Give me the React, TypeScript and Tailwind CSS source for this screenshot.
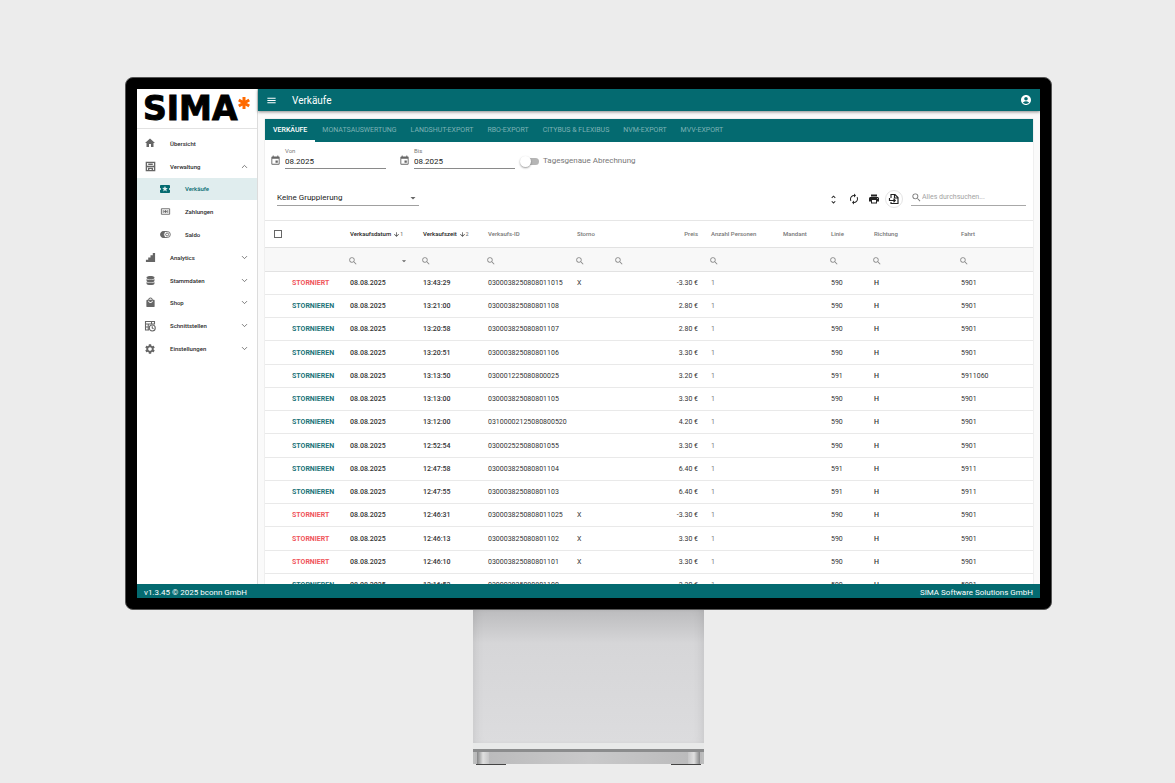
import type { ReactNode } from "react";
import {
  MdAccountCircle,
  MdArrowDownward,
  MdArrowDropDown,
  MdAutorenew,
  MdEvent,
  MdHome,
  MdLocalActivity,
  MdLocalMall,
  MdMenu,
  MdPrint,
  MdSearch,
  MdSettings,
  MdUnfoldMore,
} from "react-icons/md";
import { ChevronDown, ChevronUp } from "lucide-react";
import { FaDatabase } from "react-icons/fa";

function AsteriskMark() {
  return (
    <svg viewBox="0 0 24 24" className="ml-px size-3 shrink-0" stroke="#ff6a00" strokeWidth="6" aria-hidden="true">
      <path d="M12 0v24M1.6 6l20.8 12M22.4 6 1.6 18" />
    </svg>
  );
}

function StoreIcon() {
  return (
    <svg viewBox="0 0 24 24" className="size-[11px]" fill="none" stroke="currentColor" strokeWidth="3" aria-hidden="true">
      <path d="M3 3h18v18H3zM3 12h18" />
      <path d="M7 7h10M8 21v-5h8v5" strokeWidth="3" />
    </svg>
  );
}

function BanknoteIcon() {
  return (
    <svg viewBox="0 0 24 24" className="size-[11px]" fill="none" stroke="currentColor" strokeWidth="2" aria-hidden="true">
      <path d="M3 6h18v12H3z" />
      <path d="M7 9v6M17 9v6" />
      <circle cx="12" cy="12" r="2" fill="currentColor" />
    </svg>
  );
}

function BalanceIcon() {
  return (
    <svg viewBox="0 0 24 24" className="size-[11px]" fill="none" stroke="currentColor" strokeWidth="2" aria-hidden="true">
      <path d="M8 5.5h8a6.5 6.5 0 0 1 0 13H8a6.5 6.5 0 0 1 0-13z" />
      <path d="M8 5.5a6.5 6.5 0 0 0 0 13h3a9 9 0 0 1 0-13z" fill="currentColor" />
      <circle cx="15.5" cy="12" r="3.2" />
    </svg>
  );
}

function StairsIcon() {
  return (
    <svg viewBox="0 0 24 24" className="size-[11px]" fill="currentColor" aria-hidden="true">
      <path d="M2 22v-5h5v-5h5V7h5V2h5v20z" />
    </svg>
  );
}

function TableClockIcon() {
  return (
    <svg viewBox="0 0 24 24" className="size-3" fill="none" stroke="currentColor" strokeWidth="2.2" aria-hidden="true">
      <path d="M10 20H3V3h18v6M3 8h18M8.500 8v12M3 14h6M15 3v5" />
      <circle cx="16.500" cy="16" r="6" />
      <path d="M16.500 12.500V16l2.500 1.500" />
    </svg>
  );
}

function ExportIcon() {
  return (
    <svg viewBox="0 0 24 24" className="size-3" fill="none" stroke="currentColor" strokeWidth="2.300" aria-hidden="true">
      <path d="M6 10V3h8l6 6v12H6v-3M13 3v7h7" />
      <path d="M3 10v5h11M11 11.500l3.500 3.500-3.500 3.500" />
    </svg>
  );
}

type NavItem = {
  label: string;
  icon: ReactNode;
  child?: boolean;
  active?: boolean;
  toggle?: "open" | "closed";
};

const navItems: NavItem[] = [
  { label: "Übersicht", icon: <MdHome className="size-3" /> },
  { label: "Verwaltung", icon: <StoreIcon />, toggle: "open" },
  { label: "Verkäufe", icon: <MdLocalActivity className="size-3" />, child: true, active: true },
  { label: "Zahlungen", icon: <BanknoteIcon />, child: true },
  { label: "Saldo", icon: <BalanceIcon />, child: true },
  { label: "Analytics", icon: <StairsIcon />, toggle: "closed" },
  { label: "Stammdaten", icon: <FaDatabase className="size-[9px]" />, toggle: "closed" },
  { label: "Shop", icon: <MdLocalMall className="size-[11px]" />, toggle: "closed" },
  { label: "Schnittstellen", icon: <TableClockIcon />, toggle: "closed" },
  { label: "Einstellungen", icon: <MdSettings className="size-3" />, toggle: "closed" },
];

const tabs = [
  "VERKÄUFE",
  "MONATSAUSWERTUNG",
  "LANDSHUT-EXPORT",
  "RBO-EXPORT",
  "CITYBUS & FLEXIBUS",
  "NVM-EXPORT",
  "MVV-EXPORT",
];

type Sale = {
  time: string;
  id: string;
  price: string;
  line: string;
  trip: string;
  cancelled?: boolean;
};

const sales: Sale[] = [
  { time: "13:43:29", id: "0300038250808011015", price: "-3.30 €", line: "590", trip: "5901", cancelled: true },
  { time: "13:21:00", id: "030003825080801108", price: "2.80 €", line: "590", trip: "5901" },
  { time: "13:20:58", id: "030003825080801107", price: "2.80 €", line: "590", trip: "5901" },
  { time: "13:20:51", id: "030003825080801106", price: "3.30 €", line: "590", trip: "5901" },
  { time: "13:13:50", id: "030001225080800025", price: "3.20 €", line: "591", trip: "5911060" },
  { time: "13:13:00", id: "030003825080801105", price: "3.30 €", line: "590", trip: "5901" },
  { time: "13:12:00", id: "03100002125080800520", price: "4.20 €", line: "590", trip: "5901" },
  { time: "12:52:54", id: "030002525080801055", price: "3.30 €", line: "590", trip: "5901" },
  { time: "12:47:58", id: "030003825080801104", price: "6.40 €", line: "591", trip: "5911" },
  { time: "12:47:55", id: "030003825080801103", price: "6.40 €", line: "591", trip: "5911" },
  { time: "12:46:31", id: "0300038250808011025", price: "-3.30 €", line: "590", trip: "5901", cancelled: true },
  { time: "12:46:13", id: "030003825080801102", price: "3.30 €", line: "590", trip: "5901", cancelled: true },
  { time: "12:46:10", id: "030003825080801101", price: "3.30 €", line: "590", trip: "5901", cancelled: true },
  { time: "12:16:52", id: "030003825080801100", price: "3.30 €", line: "590", trip: "5901" },
];

function Sidebar() {
  return (
    <aside className="flex w-[121px] shrink-0 flex-col border-r border-[#dcdcdc] bg-white">
      <div className="flex h-10 items-start border-b border-[#e2e2e2] pt-2 pl-[6px]">
        <span className="font-['DejaVu_Sans',sans-serif] text-[33px] leading-6 font-bold text-black [-webkit-text-stroke:1px_black]">
          SIMA
        </span>
        <AsteriskMark />
      </div>
      <nav className="mt-[3px] grid h-[228px] grid-rows-10">
        {navItems.map((item) => (
          <a
            key={item.label}
            href="#"
            className={`flex items-center text-[6px] font-medium ${item.child ? "pl-[22px]" : "pl-[7px]"} ${
              item.active ? "bg-[#e0edee] text-[#046a70]" : "text-[#2a2a2a]"
            }`}
          >
            <span
              className={`mr-[14px] flex w-3 items-center justify-center ${
                item.active ? "text-[#046a70]" : "text-[#666]"
              }`}
            >
              {item.icon}
            </span>
            <span className="grow">{item.label}</span>
            {item.toggle === "open" && <ChevronUp className="mr-2 size-[9px] text-[#555]" />}
            {item.toggle === "closed" && <ChevronDown className="mr-2 size-[9px] text-[#555]" />}
          </a>
        ))}
      </nav>
    </aside>
  );
}

function DateField({ id, label }: { id: string; label: string }) {
  return (
    <div className="flex items-start">
      <MdEvent className="mt-[7px] mr-1 size-[11px] text-[#666]" />
      <div className="flex w-[101px] flex-col border-b border-[#8a8a8a]">
        <label htmlFor={id} className="text-[6px] leading-[6px] text-[#777]">
          {label}
        </label>
        <input id={id} defaultValue="08.2025" className="h-[14px] w-full text-[8px] text-[#222] outline-none" />
      </div>
    </div>
  );
}

function Filters() {
  return (
    <div className="flex items-start gap-[13px] pt-[6px] pl-[5px]">
      <DateField id="from" label="Von" />
      <DateField id="to" label="Bis" />
      <label className="-ml-2 flex h-[26px] items-center gap-1 text-[8px] text-[#777]">
        <input type="checkbox" role="switch" className="peer sr-only" />
        <span className="flex h-[7px] w-[19px] items-center rounded-full bg-linear-to-r from-transparent from-30% to-[#b5b5b5] to-30%">
          <span className="size-[11px] shrink-0 rounded-full bg-white shadow-[0_1px_2px_rgba(0,0,0,0.4)]" />
        </span>
        Tagesgenaue Abrechnung
      </label>
    </div>
  );
}

function Toolbar() {
  return (
    <div className="mt-4 mb-[11px] flex h-[19px] items-start justify-between pr-[7px] pl-3">
      <div className="relative w-[142px] border-b border-[#a0a0a0]">
        <select
          aria-label="Gruppierung"
          className="block h-[15px] w-full appearance-none text-[8px] text-[#222] outline-none"
        >
          <option>Keine Gruppierung</option>
        </select>
        <MdArrowDropDown className="pointer-events-none absolute top-[2px] right-0 size-3 text-[#666]" />
      </div>
      <div className="flex items-start text-[#222]">
        <div className="mr-2 flex items-center gap-[3px]">
          <button aria-label="Ausklappen" className="flex size-[17px] items-center justify-center">
            <MdUnfoldMore className="size-[11px]" />
          </button>
          <button aria-label="Aktualisieren" className="flex size-[17px] items-center justify-center">
            <MdAutorenew className="size-3" />
          </button>
          <button aria-label="Drucken" className="flex size-[17px] items-center justify-center">
            <MdPrint className="size-3" />
          </button>
          <button
            aria-label="Exportieren"
            className="flex size-[18px] items-center justify-center rounded-full border border-[#e4e4e4]"
          >
            <ExportIcon />
          </button>
        </div>
        <div className="flex h-4 w-[115px] items-center border-b border-[#a8a8a8]">
          <MdSearch className="size-[11px] shrink-0 text-[#777]" />
          <input
            aria-label="Alles durchsuchen"
            placeholder="Alles durchsuchen..."
            className="w-full min-w-0 text-[7px] outline-none placeholder:text-[#a3a3a3]"
          />
        </div>
      </div>
    </div>
  );
}

function SortHead({ label, order }: { label: string; order: number }) {
  return (
    <th className="pl-[2px] font-medium text-[#222]">
      <button className="flex items-center whitespace-nowrap">
        {label}
        <MdArrowDownward className="ml-[2px] size-[7px]" />
        <span className="text-[5px] text-[#777]">{order}</span>
      </button>
    </th>
  );
}

function FilterCell({ select = false }: { select?: boolean }) {
  return (
    <td>
      <div className="flex items-center pt-[3px] pr-3">
        <MdSearch className="size-[10px] text-[#8a8a8a]" />
        {select && <MdArrowDropDown className="ml-auto size-[10px] text-[#666]" />}
      </div>
    </td>
  );
}

function SalesTable() {
  return (
    <table className="w-full table-fixed border-collapse text-left text-[7px] leading-[8px] text-[#333]">
      <colgroup>
        <col className="w-[25px]" />
        <col className="w-[58px]" />
        <col className="w-[73px]" />
        <col className="w-[65px]" />
        <col className="w-[89px]" />
        <col className="w-[39px]" />
        <col className="w-[95px]" />
        <col className="w-[72px]" />
        <col className="w-[48px]" />
        <col className="w-[43px]" />
        <col className="w-[87px]" />
        <col className="w-[74px]" />
      </colgroup>
      <thead className="text-[6px] text-[#777]">
        <tr className="h-[27px] border-t border-[#e6e6e6] *:font-medium">
          <th className="pl-[9px]">
            <input
              type="checkbox"
              aria-label="Alle auswählen"
              className="block size-2 appearance-none border border-[#666] bg-white"
            />
          </th>
          <th />
          <SortHead label="Verkaufsdatum" order={1} />
          <SortHead label="Verkaufszeit" order={2} />
          <th className="pl-[2px]">Verkaufs-ID</th>
          <th className="pl-[2px]">Storno</th>
          <th className="pr-[11px] text-right">Preis</th>
          <th className="pl-[2px]">Anzahl Personen</th>
          <th className="pl-[2px]">Mandant</th>
          <th className="pl-[2px]">Linie</th>
          <th className="pl-[2px]">Richtung</th>
          <th className="pl-[2px]">Fahrt</th>
        </tr>
        <tr className="h-6 border-y border-[#e2e2e2] bg-[#f8f8f8]">
          <td />
          <td />
          <FilterCell select />
          <FilterCell />
          <FilterCell />
          <FilterCell />
          <FilterCell />
          <FilterCell />
          <td />
          <FilterCell />
          <FilterCell />
          <FilterCell />
        </tr>
      </thead>
      <tbody>
        {sales.map((sale) => (
          <tr key={sale.id} className="h-[23px] border-b border-[#e9e9e9] *:pl-[2px] nth-[4n]:h-6">
            <td />
            <td className="font-bold">
              <button className={sale.cancelled ? "text-[#f0565c]" : "text-[#1c7479]"}>
                {sale.cancelled ? "STORNIERT" : "STORNIEREN"}
              </button>
            </td>
            <td className="font-medium">08.08.2025</td>
            <td className="font-medium">{sale.time}</td>
            <td>{sale.id}</td>
            <td>{sale.cancelled ? "X" : ""}</td>
            <td className="pr-[11px] text-right">{sale.price}</td>
            <td className="text-[#777]">1</td>
            <td />
            <td>{sale.line}</td>
            <td className="font-medium">H</td>
            <td>{sale.trip}</td>
          </tr>
        ))}
      </tbody>
    </table>
  );
}

function Screen() {
  return (
    <div className="flex h-full flex-col overflow-hidden bg-white">
      <div className="flex min-h-0 grow">
        <Sidebar />
        <div className="flex min-w-0 grow flex-col bg-[#fafafa]">
          <header className="z-10 flex h-[22px] shrink-0 items-center bg-[#046a70] px-2 text-white shadow-[0_1px_3px_rgba(0,0,0,0.45)]">
            <button aria-label="Menü">
              <MdMenu className="size-[11px]" />
            </button>
            <h1 className="ml-[15px] grow text-[10px]">Verkäufe</h1>
            <button aria-label="Konto">
              <MdAccountCircle className="size-3" />
            </button>
          </header>
          <main className="min-h-0 grow overflow-hidden px-[7px] pt-2">
            <section className="bg-white shadow-[0_0_1px_rgba(0,0,0,0.25)]">
              <div className="flex h-[23px] bg-[#046a70]" role="tablist">
                {tabs.map((tab, index) => (
                  <button
                    key={tab}
                    role="tab"
                    aria-selected={index === 0}
                    className={`border-b-2 pt-[2px] text-[7px] ${
                      index === 0
                        ? "border-white px-2 font-medium text-white"
                        : "border-transparent px-[7px] text-[#7db2b5]"
                    }`}
                  >
                    {tab}
                  </button>
                ))}
              </div>
              <Filters />
              <Toolbar />
              <SalesTable />
            </section>
          </main>
        </div>
      </div>
      <footer className="z-10 flex h-[14px] shrink-0 items-center justify-between bg-[#046a70] px-[7px] pt-[3px] text-[8px] text-white">
        <span>v1.3.45 © 2025 bconn GmbH</span>
        <span>SIMA Software Solutions GmbH</span>
      </footer>
    </div>
  );
}

function Stand() {
  return (
    <div className="w-[231px] shrink-0 self-center">
      <div className="h-[133px] bg-linear-to-b from-[#bcbcbe] via-[#d6d6d8] via-25% to-[#dcdcde] shadow-[inset_8px_0_12px_-8px_rgba(0,0,0,0.12),inset_-8px_0_12px_-8px_rgba(0,0,0,0.12)]" />
      <div className="h-[6px] bg-[#e8e9e9]" />
      <div className="h-[3px] bg-[#8b8c8d]" />
      <div className="h-3 bg-linear-to-r from-[#b9b9ba] via-[#c9c9ca] to-[#b9b9ba]">
        <div className="flex h-full justify-between border-x-2 border-[#bdbebe] px-[2px]">
          <span className="w-3 bg-linear-to-r from-[#858687] via-[#e0e0e0] to-[#c6c6c7]" />
          <span className="w-3 bg-linear-to-l from-[#858687] via-[#e0e0e0] to-[#c6c6c7]" />
        </div>
      </div>
      <div className="flex justify-between px-[3px]">
        <span className="h-px w-[30px] bg-[#444]" />
        <span className="h-px w-[30px] bg-[#444]" />
      </div>
    </div>
  );
}

export default function App() {
  return (
    <div className="flex h-screen flex-col overflow-hidden bg-[#ececec] pt-[77px] pr-[123px] pb-[18px] pl-[125px] font-['Roboto',sans-serif]">
      <div className="min-h-0 grow">
        <div className="h-full rounded-lg border border-[#555] bg-black p-[11px]">
          <Screen />
        </div>
      </div>
      <Stand />
    </div>
  );
}
